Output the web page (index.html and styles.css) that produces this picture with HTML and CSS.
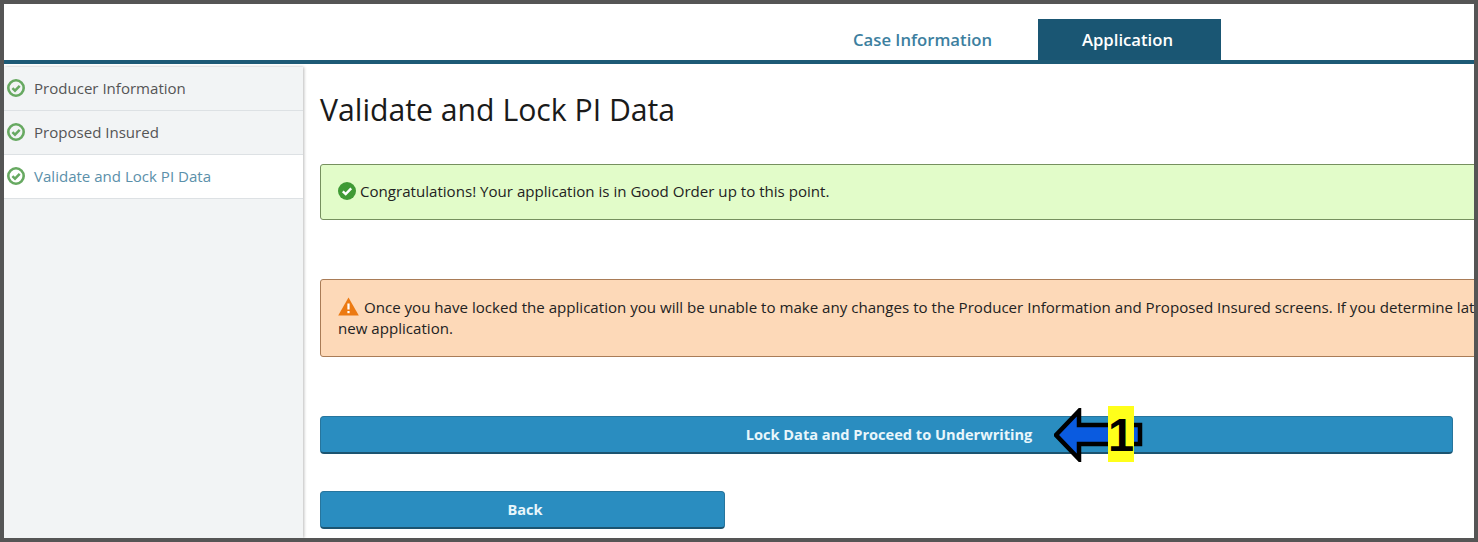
FILE: index.html
```html
<!DOCTYPE html>
<html lang="en">
<head>
<meta charset="utf-8">
<title>Validate and Lock PI Data</title>
<link rel="stylesheet" href="styles.css">
</head>
<body>
<div class="frame">
  <header class="topbar">
    <nav class="tabs">
      <a class="tab">Case Information</a>
      <a class="tab tab-active">Application</a>
    </nav>
  </header>
  <div class="body">
    <aside class="sidebar">
      <div class="step">
        <svg class="step-icon" viewBox="0 0 18 18"><circle cx="9" cy="9" r="7.7" fill="none" stroke="#67a961" stroke-width="2.6"/><path d="M5.4 9.1 8 11.7 12.7 6.8" fill="none" stroke="#67a961" stroke-width="2.5"/></svg>
        <span>Producer Information</span>
      </div>
      <div class="step">
        <svg class="step-icon" viewBox="0 0 18 18"><circle cx="9" cy="9" r="7.7" fill="none" stroke="#67a961" stroke-width="2.6"/><path d="M5.4 9.1 8 11.7 12.7 6.8" fill="none" stroke="#67a961" stroke-width="2.5"/></svg>
        <span>Proposed Insured</span>
      </div>
      <div class="step step-current">
        <svg class="step-icon" viewBox="0 0 18 18"><circle cx="9" cy="9" r="7.7" fill="none" stroke="#67a961" stroke-width="2.6"/><path d="M5.4 9.1 8 11.7 12.7 6.8" fill="none" stroke="#67a961" stroke-width="2.5"/></svg>
        <span>Validate and Lock PI Data</span>
      </div>
    </aside>
    <main class="content">
      <h1 class="title">Validate and Lock PI Data</h1>
      <div class="alert alert-ok">
        <svg class="ok-icon" viewBox="0 0 18 18"><circle cx="9" cy="9" r="9" fill="#3f9a35"/><path d="M4.8 9.3 7.7 12.1 13.2 6.4" fill="none" stroke="#fff" stroke-width="2.4"/></svg>
        <span>Congratulations! Your application is in Good Order up to this point.</span>
      </div>
      <div class="alert alert-warn">
        <svg class="warn-icon" viewBox="0 0 21 19"><path d="M10.5 0.5 20.8 18.5H0.2Z" fill="#ec7a12"/><rect x="9.4" y="6.5" width="2.2" height="6" fill="#fff"/><rect x="9.4" y="14" width="2.2" height="2.2" fill="#fff"/></svg>
        <span>Once you have locked the application you will be unable to make any changes to the Producer Information and Proposed Insured screens. If you determine later that changes are needed, you must start a<br>new application.</span>
      </div>
      <button class="btn btn-wide">Lock Data and Proceed to Underwriting</button>
      <button class="btn btn-back">Back</button>
    </main>
  </div>
  <div class="callout">
    <svg class="callout-arrow" viewBox="0 0 90 54"><path d="M2 27 25 3V17H86V36H25V51Z" fill="#0a5be0" stroke="#000" stroke-width="4.5"/></svg>
    <span class="callout-num">1</span>
  </div>
</div>
</body>
</html>
```
FILE: styles.css
```css
* { box-sizing: border-box; }
html, body { margin: 0; padding: 0; }
body {
  width: 1478px;
  height: 542px;
  overflow: hidden;
  font-family: "Open Sans", "Liberation Sans", sans-serif;
  background: #555;
}
.frame {
  position: relative;
  width: 1470px;
  height: 534px;
  margin: 4px;
  background: #fff;
  overflow: hidden;
  display: flex;
  flex-direction: column;
}
.topbar {
  height: 60px;
  flex: none;
  padding-top: 15px;
  border-bottom: 4px solid #1d5a76;
}
.tabs { display: flex; margin-left: 805px; }
.tab {
  height: 41px;
  line-height: 41px;
  font-size: 16.7px;
  font-weight: 600;
  color: #3d7f9f;
}
.tab:first-child { width: 229px; padding-left: 44px; }
.tab-active {
  width: 183px;
  padding-right: 4px;
  background: #1a5673;
  color: #fff;
  text-align: center;
}
.body { flex: 1; display: flex; min-height: 0; }
.sidebar {
  width: 299px;
  flex: none;
  margin-top: 3px;
  background: #f2f4f5;
  box-shadow: 1px 0 3px #bbb;
}
.step {
  height: 44px;
  display: flex;
  align-items: center;
  padding: 0 0 2px 3px;
  gap: 9px;
  font-size: 15.05px;
  color: #555;
  border-bottom: 1px solid #dde1e4;
}
.step-current { background: #fff; color: #5b90aa; }
.step-icon { width: 18px; height: 18px; flex: none; }
.content {
  flex: 1;
  min-width: 0;
  padding-left: 17px;
  overflow: hidden;
}
.title {
  margin: 27px 0 0;
  height: 73px;
  line-height: 38px;
  font-size: 30.2px;
  font-weight: 400;
  color: #1a1a1a;
}
.alert {
  width: 1300px;
  border-radius: 3px;
  font-size: 15.1px;
  color: #222;
  white-space: nowrap;
}
.alert-ok {
  height: 56px;
  display: flex;
  align-items: center;
  gap: 4px;
  padding: 0 0 2px 17px;
  background: #e2fcc9;
  border: 1px solid #76905f;
}
.ok-icon { width: 18px; height: 18px; flex: none; }
.alert-warn {
  height: 78px;
  margin-top: 59px;
  padding: 17px 17px 0;
  line-height: 21px;
  background: #fdd9b8;
  border: 1px solid #a97c57;
}
.warn-icon { width: 21px; height: 19px; vertical-align: -3px; margin-right: 1px; }
.btn {
  display: block;
  height: 38px;
  padding: 0 0 2px 5px;
  border: 1px solid #27759d;
  border-bottom: 2px solid #1c5470;
  border-radius: 4px;
  background: #2a8dc0;
  color: #e8f6fb;
  font-family: inherit;
  font-size: 14.6px;
  font-weight: 700;
  text-align: center;
}
.btn-wide { width: 1133px; margin-top: 59px; }
.btn-back { width: 405px; margin-top: 37px; }
.callout {
  position: absolute;
  left: 1050px;
  top: 402px;
  width: 90px;
  height: 56px;
}
.callout-arrow {
  position: absolute;
  left: 0;
  top: 2px;
  width: 90px;
  height: 54px;
}
.callout-num {
  position: absolute;
  left: 54px;
  top: 0;
  width: 26px;
  height: 56px;
  background: #ffff1a;
  color: #000;
  font-family: "Liberation Sans", sans-serif;
  font-weight: 700;
  font-size: 47px;
  line-height: 58px;
  text-align: center;
}
```
